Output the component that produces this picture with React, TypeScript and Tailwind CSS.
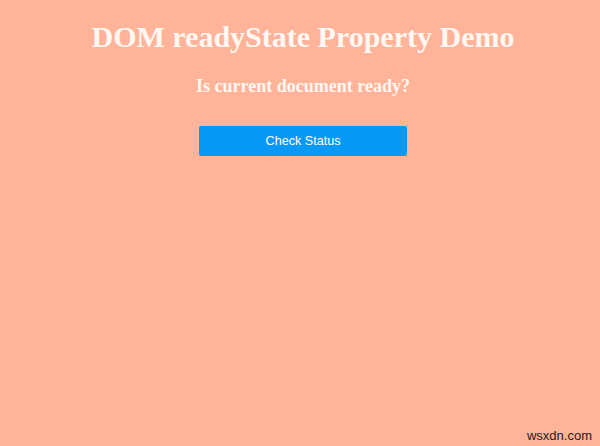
export default function App() {
  return (
    <div className="relative w-[600px] h-[446px] overflow-hidden bg-[#ffb399]">
      <div className="flex flex-col items-center pl-[6px] pt-[22px] font-['Liberation_Serif','Times_New_Roman',serif]">
        <h1 className="text-[30px] leading-[30px] font-bold text-[#fff8f2] whitespace-nowrap">
          DOM readyState Property Demo
        </h1>
        <h3 className="mt-[25px] text-[18px] leading-[18px] font-bold text-[#fff8f2] whitespace-nowrap">
          Is current document ready?
        </h3>
        <button className="mt-[31px] w-[208px] h-[30px] bg-[#0899f7] rounded-[2px] text-white text-[12.6px] flex items-center justify-center font-['Liberation_Sans',Arial,sans-serif]">
          Check Status
        </button>
      </div>
      <div className="absolute right-[8px] bottom-[3px] text-[13px] leading-[15px] text-[#222] font-['Liberation_Sans',Arial,sans-serif]">
        wsxdn.com
      </div>
    </div>
  );
}
